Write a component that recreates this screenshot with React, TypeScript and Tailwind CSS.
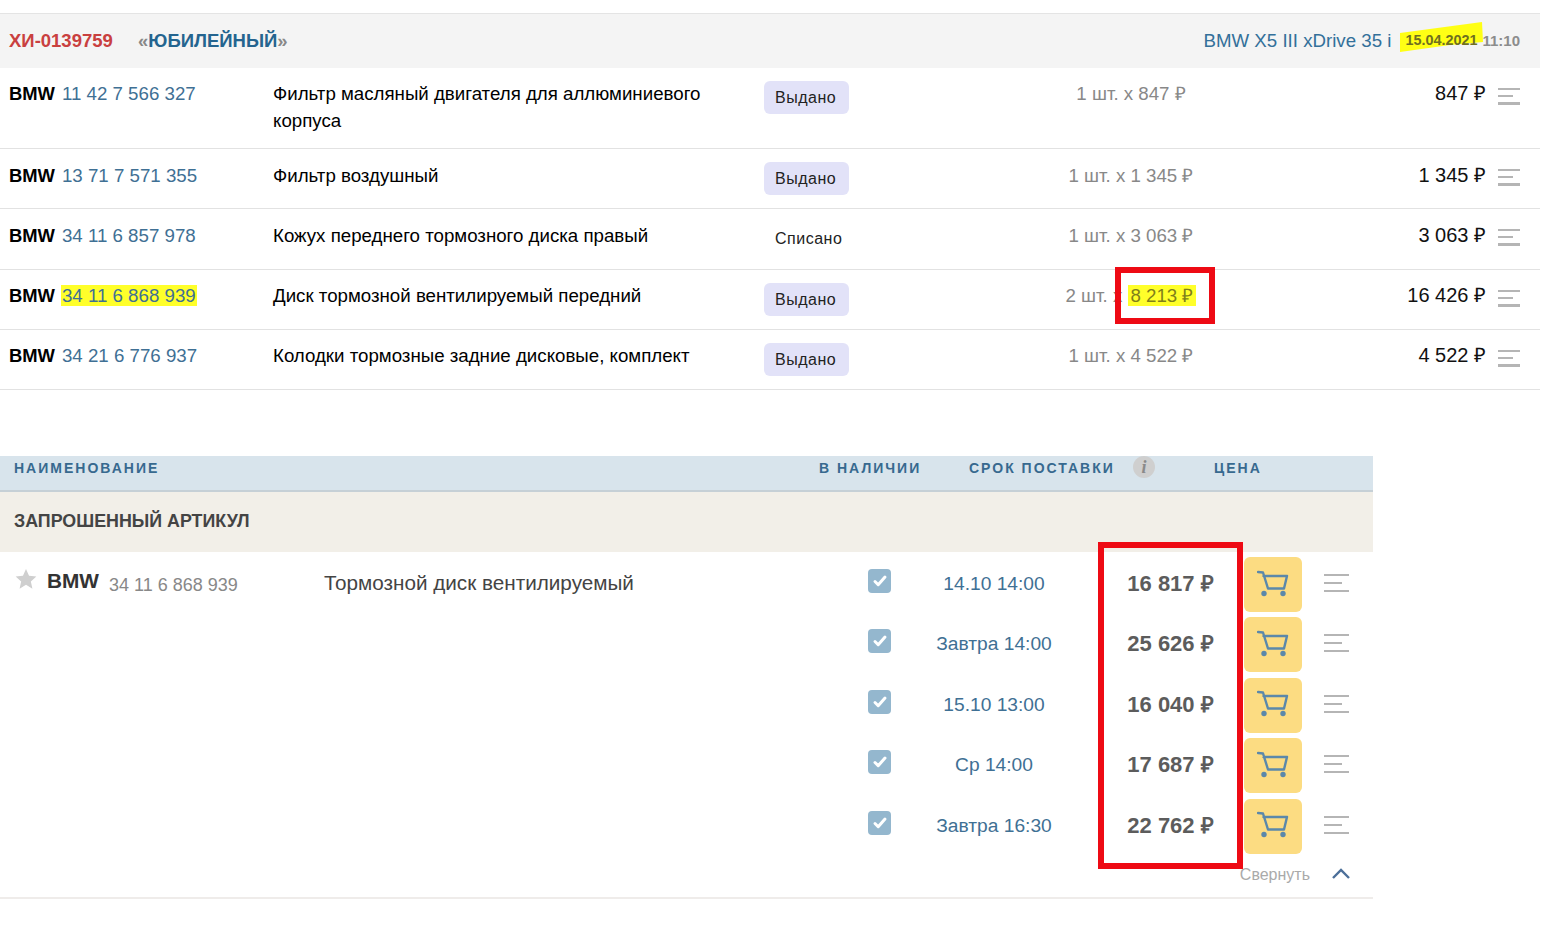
import React from "react";

const Lines = ({ big }: { big?: boolean }) =>
  big ? (
    <div className="flex w-[25px] flex-col gap-[6px]">
      <div className="h-[2px] w-[25px] bg-[#b5b5b5]" />
      <div className="h-[2px] w-[18px] bg-[#b5b5b5]" />
      <div className="h-[2px] w-[25px] bg-[#b5b5b5]" />
    </div>
  ) : (
    <div className="flex w-[22px] flex-col gap-[5px]">
      <div className="h-[2px] w-[22px] bg-[#b5b5b5]" />
      <div className="h-[2px] w-[15px] bg-[#b5b5b5]" />
      <div className="h-[3px] w-[22px] bg-[#b5b5b5]" />
    </div>
  );

const Cart = () => (
  <svg width="32" height="27" viewBox="0 0 32 27" fill="none" stroke="#5b88aa" strokeWidth="2.4" strokeLinejoin="round" strokeLinecap="round">
    <path d="M1 2 L6 2.5 L11 18.5 L27 18.5 L30 6 L6.5 6" />
    <circle cx="7" cy="23.5" r="2.7" fill="#5b88aa" stroke="none" />
    <circle cx="26" cy="23.5" r="2.7" fill="#5b88aa" stroke="none" />
  </svg>
);

type Part = { brandCode: string; hl?: boolean; name: string; status: string; qty: string; price?: string; total: string; h: string; tp: string };

const parts: Part[] = [
  { brandCode: "11 42 7 566 327", name: "Фильтр масляный двигателя для аллюминиевого корпуса", status: "Выдано", qty: "1 шт. x 847 ₽", total: "847 ₽", h: "h-[81px]", tp: "-mt-[1px]" },
  { brandCode: "13 71 7 571 355", name: "Фильтр воздушный", status: "Выдано", qty: "1 шт. x 1 345 ₽", total: "1 345 ₽", h: "h-[60px]", tp: "" },
  { brandCode: "34 11 6 857 978", name: "Кожух переднего тормозного диска правый", status: "Списано", qty: "1 шт. x 3 063 ₽", total: "3 063 ₽", h: "h-[61px]", tp: "" },
  { brandCode: "34 11 6 868 939", hl: true, name: "Диск тормозной вентилируемый передний", status: "Выдано", qty: "2 шт. x ", price: "8 213 ₽", total: "16 426 ₽", h: "h-[60px]", tp: "-mt-[1px]" },
  { brandCode: "34 21 6 776 937", name: "Колодки тормозные задние дисковые, комплект", status: "Выдано", qty: "1 шт. x 4 522 ₽", total: "4 522 ₽", h: "h-[60px]", tp: "-mt-[1px]" },
];

const offers = [
  ["14.10 14:00", "16 817 ₽"],
  ["Завтра 14:00", "25 626 ₽"],
  ["15.10 13:00", "16 040 ₽"],
  ["Ср 14:00", "17 687 ₽"],
  ["Завтра 16:30", "22 762 ₽"],
];

export default function App() {
  return (
    <div className="relative h-[945px] w-[1545px] overflow-hidden bg-white pt-[13px] font-['Liberation_Sans',Arial,sans-serif] text-[18.7px] leading-[27px] text-[#222]">
      <div className="w-[1540px]">
        <div className="flex h-[55px] items-center justify-between border-t border-[#e4e4e4] bg-[#f4f4f4] pb-[2px] pl-[9px] pr-[20px]">
          <div className="flex items-center">
            <span className="w-[129px] text-[18.5px] font-bold text-[#c9403f]">ХИ-0139759</span>
            <span className="text-[18.5px] font-bold text-[#888]">
              «<span className="text-[#24648f]">ЮБИЛЕЙНЫЙ</span>»
            </span>
          </div>
          <div className="flex items-center">
            <span className="mr-[14px] text-[18.7px] text-[#33709a]">BMW X5 III xDrive 35 i</span>
            <span className="relative mr-[5px] text-[14.4px] font-bold text-[#6f6f20]">
              <svg className="absolute left-[-5px] top-[-5px]" width="83" height="31" viewBox="0 0 83 31">
                <polygon points="0,11 82,0 83,20 50,23 0,30" fill="#ffff14" />
              </svg>
              <span className="relative">15.04.2021</span>
            </span>
            <span className="text-[15px] font-bold text-[#8c8c8c]">11:10</span>
          </div>
        </div>

        {parts.map((p) => (
          <div key={p.brandCode} className={`grid grid-cols-[264px_491px_196px_342px_184px_12px_22px] border-b border-[#e2e2e2] pl-[9px] pt-[13px] ${p.h}`}>
            <div className={`whitespace-nowrap ${p.tp}`}>
              <span className="mr-[7px] text-[18.4px] font-bold text-black">BMW</span>
              <span className={p.hl ? "-ml-[1px] bg-[#ffff2a] px-[1px] text-[#3f7094]" : "text-[#3f7094]"}>{p.brandCode}</span>
            </div>
            <div className={`pr-[40px] text-black ${p.tp}`}>{p.name}</div>
            <div>
              <span className={`inline-block h-[33px] w-[85px] rounded-[6px] px-[11px] text-[16px] leading-[33px] tracking-[0.5px] ${p.status === "Выдано" ? "bg-[#e2e2f8]" : ""}`}>{p.status}</span>
            </div>
            <div className={`text-center text-[#888] ${p.tp}`}>
              {p.qty}
              {p.price && <span className="bg-[#ffff2a] px-[3px] text-[#80801a]">{p.price}</span>}
            </div>
            <div className={`text-right text-[20px] text-[#111] ${p.tp}`}>{p.total}</div>
            <div />
            <div className="pt-[7px]"><Lines /></div>
          </div>
        ))}
      </div>

      <div className="mt-[66px] w-[1373px]">
        <div className="relative flex h-[36px] border-b-2 border-[#c6d0d6] bg-[#d8e4ec] pt-[2px] text-[14px] font-bold leading-[20px] tracking-[2px] text-[#37698f]">
          <span className="w-[819px] pl-[14px]">НАИМЕНОВАНИЕ</span>
          <span className="w-[150px]">В НАЛИЧИИ</span>
          <span className="w-[164px]">СРОК ПОСТАВКИ</span>
          <span className="flex h-[22px] w-[81px] -translate-y-[2px] items-center justify-start">
            <span className="flex h-[22px] w-[22px] items-center justify-center rounded-full bg-[#cfcfcf] font-['Liberation_Serif',serif] text-[18px] italic tracking-normal text-[#8a8a8a]">i</span>
          </span>
          <span>ЦЕНА</span>
        </div>
        <div className="flex h-[60px] items-center bg-[#f2efe8] pb-[2px] pl-[14px] text-[17.85px] font-bold text-[#444]">ЗАПРОШЕННЫЙ АРТИКУЛ</div>

        <div>
          {offers.map(([date, price], i) => (
            <div key={date + price} className="flex h-[60.4px] items-start pt-[5px]">
              <div className="flex w-[868px] items-start">
                {i === 0 && (
                  <>
                    <svg className="ml-[15px] mt-[11px] shrink-0" width="22" height="22" viewBox="0 0 24 24" fill="#cfcfcf">
                      <path d="M12 1l3.3 7.4 8 .8-6 5.4 1.7 7.9-7-4.1-7 4.1 1.7-7.9-6-5.4 8-.8z" />
                    </svg>
                    <span className="ml-[10px] mt-[10px] w-[62px] text-[20.8px] font-bold text-[#333]">BMW</span>
                    <span className="mt-[15px] w-[215px] text-[18px] text-[#888]">34 11 6 868 939</span>
                    <span className="mt-[12px] whitespace-nowrap text-[20.7px] text-[#444]">Тормозной диск вентилируемый</span>
                  </>
                )}
              </div>
              <div className="mt-[12px] flex h-[24px] w-[23px] items-center justify-center rounded-[4px] bg-[#94b7ce]">
                <svg width="16" height="14" viewBox="0 0 16 14" fill="none" stroke="#fff" strokeWidth="3" strokeLinecap="round" strokeLinejoin="round">
                  <path d="M3 7.5l3.2 3.2L13 3" />
                </svg>
              </div>
              <div className="mt-[13px] w-[206px] text-center text-[19.2px] text-[#3f7094]">{date}</div>
              <div className="mt-[13px] w-[147px] text-center text-[22px] font-bold text-[#5c5c5c]">{price}</div>
              <button className="flex h-[55px] w-[58px] items-center justify-center rounded-[6px] bg-[#fcdc82] pb-[3px]">
                <Cart />
              </button>
              <div className="ml-[22px] mt-[17px]"><Lines big /></div>
            </div>
          ))}
        </div>

        <div className="flex h-[45px] items-start justify-end border-b-2 border-[#efecea] pr-[23px] pt-[7px]">
          <span className="text-[16px] text-[#aaa]">Свернуть</span>
          <svg className="ml-[22px] mt-[6px]" width="18" height="12" viewBox="0 0 18 12" fill="none" stroke="#4c6f99" strokeWidth="2.4">
            <path d="M1 11l8-8 8 8" />
          </svg>
        </div>
      </div>

      <div className="absolute left-[1115px] top-[267px] h-[57px] w-[100px] border-[6px] border-[#ee0a14]" />
      <div className="absolute left-[1098px] top-[542px] h-[327px] w-[145px] border-[6px] border-[#ee0a14]" />
    </div>
  );
}
